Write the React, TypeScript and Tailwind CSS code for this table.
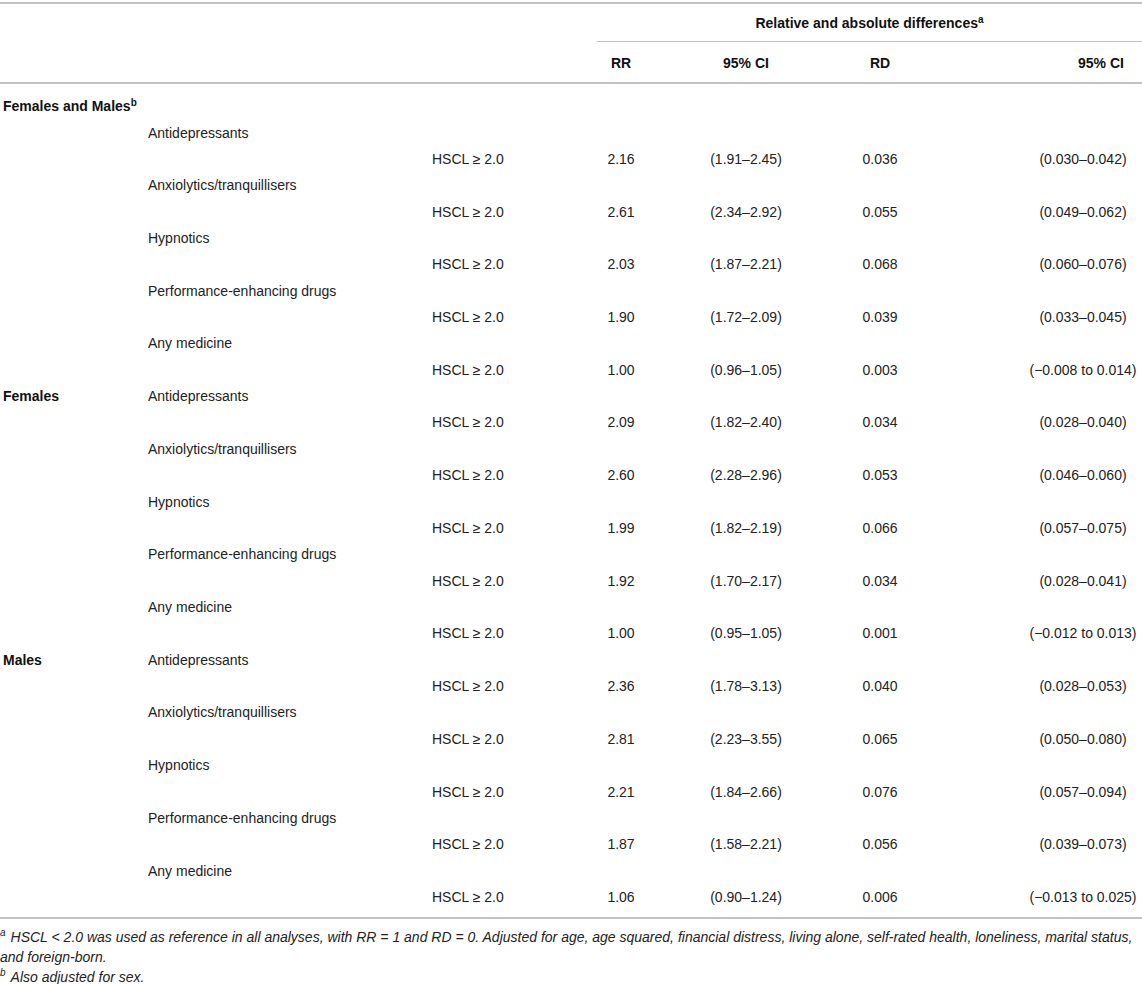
type Result = {
  rr: string;
  rrCi: string;
  rd: string;
  rdCi: string;
};

type Medicine = {
  name: string;
  result: Result;
};

type Group = {
  label: string;
  sup?: string;
  ownRow?: boolean;
  medicines: Medicine[];
};

const groups: Group[] = [
  {
    label: "Females and Males",
    sup: "b",
    ownRow: true,
    medicines: [
      { name: "Antidepressants", result: { rr: "2.16", rrCi: "(1.91–2.45)", rd: "0.036", rdCi: "(0.030–0.042)" } },
      { name: "Anxiolytics/tranquillisers", result: { rr: "2.61", rrCi: "(2.34–2.92)", rd: "0.055", rdCi: "(0.049–0.062)" } },
      { name: "Hypnotics", result: { rr: "2.03", rrCi: "(1.87–2.21)", rd: "0.068", rdCi: "(0.060–0.076)" } },
      { name: "Performance-enhancing drugs", result: { rr: "1.90", rrCi: "(1.72–2.09)", rd: "0.039", rdCi: "(0.033–0.045)" } },
      { name: "Any medicine", result: { rr: "1.00", rrCi: "(0.96–1.05)", rd: "0.003", rdCi: "(−0.008 to 0.014)" } },
    ],
  },
  {
    label: "Females",
    medicines: [
      { name: "Antidepressants", result: { rr: "2.09", rrCi: "(1.82–2.40)", rd: "0.034", rdCi: "(0.028–0.040)" } },
      { name: "Anxiolytics/tranquillisers", result: { rr: "2.60", rrCi: "(2.28–2.96)", rd: "0.053", rdCi: "(0.046–0.060)" } },
      { name: "Hypnotics", result: { rr: "1.99", rrCi: "(1.82–2.19)", rd: "0.066", rdCi: "(0.057–0.075)" } },
      { name: "Performance-enhancing drugs", result: { rr: "1.92", rrCi: "(1.70–2.17)", rd: "0.034", rdCi: "(0.028–0.041)" } },
      { name: "Any medicine", result: { rr: "1.00", rrCi: "(0.95–1.05)", rd: "0.001", rdCi: "(−0.012 to 0.013)" } },
    ],
  },
  {
    label: "Males",
    medicines: [
      { name: "Antidepressants", result: { rr: "2.36", rrCi: "(1.78–3.13)", rd: "0.040", rdCi: "(0.028–0.053)" } },
      { name: "Anxiolytics/tranquillisers", result: { rr: "2.81", rrCi: "(2.23–3.55)", rd: "0.065", rdCi: "(0.050–0.080)" } },
      { name: "Hypnotics", result: { rr: "2.21", rrCi: "(1.84–2.66)", rd: "0.076", rdCi: "(0.057–0.094)" } },
      { name: "Performance-enhancing drugs", result: { rr: "1.87", rrCi: "(1.58–2.21)", rd: "0.056", rdCi: "(0.039–0.073)" } },
      { name: "Any medicine", result: { rr: "1.06", rrCi: "(0.90–1.24)", rd: "0.006", rdCi: "(−0.013 to 0.025)" } },
    ],
  },
];

// numeric columns sit in the right block (597 -> 1142)
function NumCells({ rr, rrCi, rd, rdCi }: Result) {
  return (
    <div className="flex w-[545px]">
      <div className="w-[48px] text-center">{rr}</div>
      <div className="w-[202px] text-center">{rrCi}</div>
      <div className="w-[66px] text-center">{rd}</div>
      <div className="w-[229px] pl-[111px] text-center whitespace-nowrap">{rdCi}</div>
    </div>
  );
}

function Row({ children }: { children: React.ReactNode }) {
  return <div className="flex h-[26.37px] items-center whitespace-nowrap">{children}</div>;
}

// footnote marker, raised without a sup box
function Mark({ children }: { children: React.ReactNode }) {
  return <span className="mr-[5px] inline-block align-top text-[10px] leading-[12px]">{children}</span>;
}

export default function App() {
  return (
    <div
      className="h-[984px] w-[1142px] overflow-hidden bg-white text-[14px] leading-[20px] text-[#222]"
      style={{ fontFamily: '"Liberation Sans", Arial, sans-serif' }}
    >
      <div className="pt-[2px]">
        <div className="h-[2px] bg-[#c2c2c2]" />

        {/* header */}
        <div className="flex">
          <div className="w-[597px]" />
          <div className="w-[545px]">
            <div className="flex h-[37px] items-center justify-center pt-[1px] font-bold text-[#111]">
              <span>
                Relative and absolute differences
                <sup className="text-[10px]">a</sup>
              </span>
            </div>
            <div className="h-[1px] bg-[#c2c2c2]" />
            <div className="flex h-[40px] items-center pt-[1px] font-bold text-[#111]">
              <div className="w-[48px] text-center">RR</div>
              <div className="w-[202px] text-center">95% CI</div>
              <div className="w-[66px] text-center">RD</div>
              <div className="w-[229px] pl-[147px] text-center">95% CI</div>
            </div>
          </div>
        </div>
        <div className="h-[2px] bg-[#c2c2c2]" />

        {/* body */}
        <div className="pt-[9px] pb-[7px]">
          {groups.map((group) => (
            <div key={group.label}>
              {group.ownRow && (
                <Row>
                  <div className="pl-[3px] font-bold text-[#111]">
                    {group.label}
                    {group.sup && <sup className="text-[10px]">{group.sup}</sup>}
                  </div>
                </Row>
              )}
              {group.medicines.map((med, i) => (
                <div key={med.name}>
                  <Row>
                    <div className="w-[148px] pl-[3px] font-bold text-[#111]">
                      {!group.ownRow && i === 0 ? group.label : ""}
                    </div>
                    <div className="w-[284px]">{med.name}</div>
                  </Row>
                  <Row>
                    <div className="w-[432px]" />
                    <div className="w-[165px]">HSCL ≥ 2.0</div>
                    <NumCells {...med.result} />
                  </Row>
                </div>
              ))}
            </div>
          ))}
        </div>
        <div className="h-[2px] bg-[#c2c2c2]" />

        {/* footnotes */}
        <div className="pt-[8px] italic">
          <p>
            <Mark>a</Mark>
            <span className="whitespace-nowrap">
              HSCL &lt; 2.0 was used as reference in all analyses, with RR = 1 and RD = 0. Adjusted for age, age
              squared, financial distress, living alone, self-rated health, loneliness, marital status,
            </span>
            <br />
            <span>and foreign-born.</span>
          </p>
          <p>
            <Mark>b</Mark>
            <span>Also adjusted for sex.</span>
          </p>
        </div>
      </div>
    </div>
  );
}
